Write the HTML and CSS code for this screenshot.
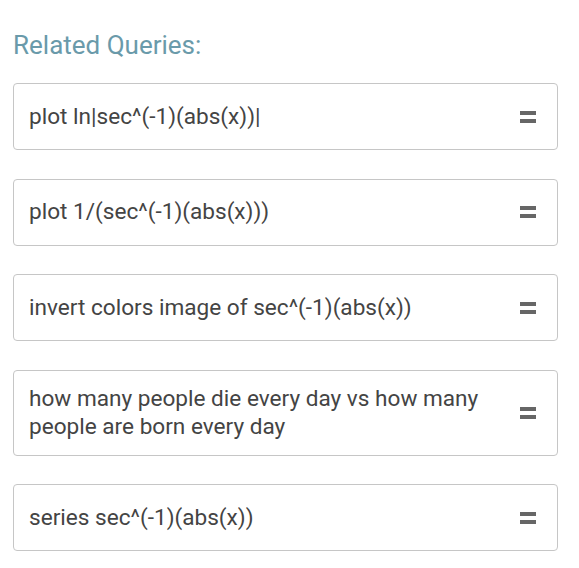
FILE: index.html
```html
<!DOCTYPE html>
<html>
<head>
<meta charset="utf-8">
<link rel="stylesheet" href="styles.css">
</head>
<body>
<div class="related">
  <h2 class="title">Related Queries:</h2>
  <div class="list">
    <div class="query"><span class="qtext">plot ln|sec^(-1)(abs(x))|</span><span class="eq"></span></div>
    <div class="query"><span class="qtext">plot 1/(sec^(-1)(abs(x)))</span><span class="eq"></span></div>
    <div class="query"><span class="qtext">invert colors image of sec^(-1)(abs(x))</span><span class="eq"></span></div>
    <div class="query"><span class="qtext">how many people die every day vs how many people are born every day</span><span class="eq"></span></div>
    <div class="query"><span class="qtext">series sec^(-1)(abs(x))</span><span class="eq"></span></div>
  </div>
</div>
</body>
</html>
```

FILE: styles.css
```css
html, body {
  margin: 0;
  padding: 0;
  background: #ffffff;
}
body {
  font-family: Roboto, "Liberation Sans", sans-serif;
}
.related {
  padding: 30px 21px 0 13px;
}
.title {
  margin: 0 0 23px 0;
  font-size: 26px;
  font-weight: 400;
  line-height: 30px;
  color: #6a9aaa;
}
.list {
  display: flex;
  flex-direction: column;
  gap: 28.6px;
}
.query {
  display: flex;
  align-items: center;
  box-sizing: border-box;
  min-height: 67px;
  padding: 14px 21px 14px 15px;
  border: 1px solid #c6c6c6;
  border-radius: 4px;
  color: #444444;
  font-size: 22.6px;
  line-height: 28px;
}
.qtext {
  flex: 1;
  padding-right: 30px;
}
.eq {
  flex: none;
  width: 16px;
  height: 12px;
  box-sizing: border-box;
  border-top: 4px solid #666666;
  border-bottom: 4px solid #666666;
}
```
